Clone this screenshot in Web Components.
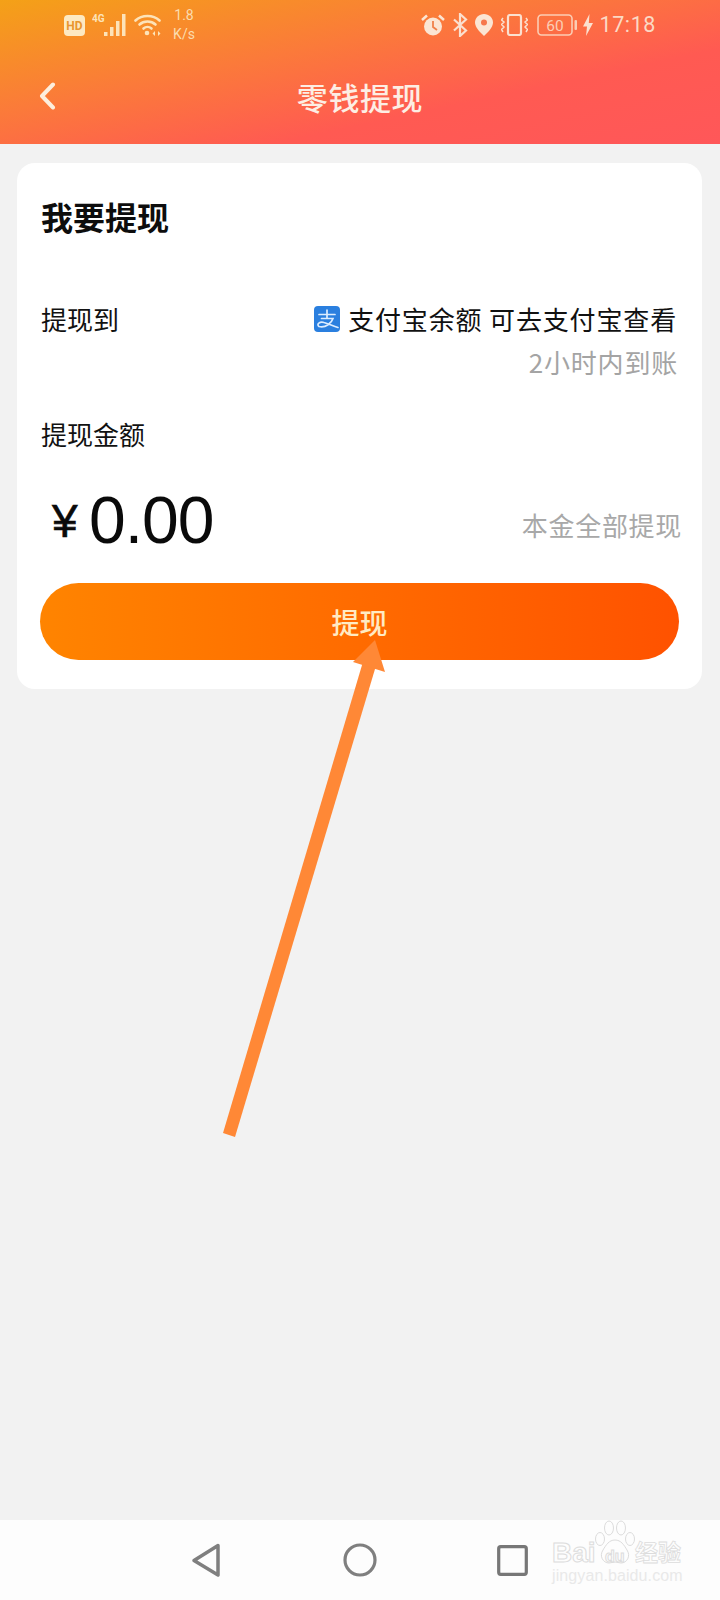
<!DOCTYPE html>
<html lang="zh-CN">
<head>
<meta charset="utf-8">
<title>零钱提现</title>
<style>
html,body{margin:0;padding:0;background:#f2f2f2}
body{font-family:"Noto Sans CJK SC","Noto Sans",sans-serif}
</style>
</head>
<body>
<x-screen>
  <x-app-header title="零钱提现"></x-app-header>
  <x-withdraw-card></x-withdraw-card>
  <x-nav-bar></x-nav-bar>
  <x-arrow></x-arrow>
  <x-watermark></x-watermark>
</x-screen>
<script>
function define(name, html){
  customElements.define(name, class extends HTMLElement{
    constructor(){super();this.attachShadow({mode:'open'}).innerHTML=typeof html==='function'?html(this):html;}
  });
}
const CJK='"Noto Sans CJK SC","Noto Sans",sans-serif';

define('x-screen',`<style>
:host{display:flex;flex-direction:column;position:relative;width:720px;height:1600px;overflow:hidden;background:#f2f2f2;font-family:${CJK}}
</style><slot></slot>`);

define('x-status-bar',`<style>
:host{display:flex;align-items:center;height:46px;padding-top:2px;color:#fde3b8;font-family:Roboto,"Liberation Sans",sans-serif}
svg{display:block;flex:none}
.sp{display:flex;flex-direction:column;align-items:center;width:24px;margin-left:10px;font-size:14px;line-height:19px;color:#fbdcae}
.right{display:flex;align-items:center;margin-left:auto;margin-right:64px;color:#fbd9c4}
.time{font-size:21.5px;letter-spacing:.6px;margin-left:6px;line-height:46px}
</style>
<svg style="margin-left:64px" width="21" height="21" viewBox="0 0 21 21"><rect width="21" height="21" rx="4" fill="#fde9c2"/><text x="10.500" y="15" text-anchor="middle" font-size="12" font-weight="700" font-family="Roboto,sans-serif" fill="#e9962f">HD</text></svg>
<svg style="margin-left:7px" width="36" height="24" viewBox="0 0 36 24"><text x="0" y="9" font-size="10" font-weight="700" font-family="Roboto,sans-serif" fill="#fde3b8">4G</text><g fill="#fde3b8"><rect x="12" y="19" width="3.500" height="4"/><rect x="18" y="14" width="3.500" height="9"/><rect x="24" y="8" width="3.500" height="15"/><rect x="30" y="1" width="3.500" height="22"/></g></svg>
<svg style="margin-left:6px" width="28" height="22" viewBox="0 0 28 22"><g fill="none" stroke="#fde3b8" stroke-width="2.600" stroke-linecap="round"><path d="M1.500 6.500C8 .5 19 .5 25.500 6.500"/><path d="M5.500 10.500C10 6.500 17 6.500 21.500 10.500"/><path d="M9.500 14.500C11.800 12.500 15.200 12.500 17.500 14.500"/></g><circle cx="13" cy="19" r="2.300" fill="#fde3b8"/><path d="M21 17l-2.500 2.500 2.500 2.500zM24 17l2.500 2.500-2.500 2.500z" fill="#fde3b8"/></svg>
<div class="sp"><span>1.8</span><span>K/s</span></div>
<div class="right">
<svg width="24" height="23" viewBox="0 0 24 23"><circle cx="12" cy="12.500" r="9" fill="#fbe5d3"/><path d="M12 7v6l4 3" fill="none" stroke="#f0804a" stroke-width="1.800"/><path d="M1 6l5-4.500M23 6l-5-4.500" stroke="#fbe5d3" stroke-width="2.500" fill="none"/></svg>
<svg style="margin-left:7px" width="16" height="24" viewBox="0 0 16 24"><path d="M2 6.500l12 11-6 5.500V1l6 5.500-12 11" fill="none" stroke="#fbe0cf" stroke-width="2.200"/></svg>
<svg style="margin-left:7px" width="18" height="22" viewBox="0 0 18 22"><path d="M9 0c5 0 9 3.800 9 8.600 0 5-5.200 10-9 13.400C5.200 18.600 0 13.600 0 8.600 0 3.800 4 0 9 0z" fill="#fbe5d3"/><circle cx="9" cy="8.500" r="3" fill="#f6774b"/></svg>
<svg style="margin-left:8px" width="27" height="22" viewBox="0 0 27 22"><rect x="7" y="1" width="13" height="20" rx="2" fill="none" stroke="#fbe0cf" stroke-width="2.200"/><path d="M2 4l-1.500 2 2.500 2-2.500 2.500 2.500 2.500-2.500 2.500L2 18M25 4l1.500 2-2.500 2 2.500 2.500-2.500 2.500 2.500 2.500L25 18" fill="none" stroke="#fbe0cf" stroke-width="1.500"/></svg>
<svg style="margin-left:9px" width="40" height="22" viewBox="0 0 40 22"><rect x="1" y="1" width="34" height="20" rx="3.500" fill="none" stroke="#fbcdb4" stroke-width="1.600"/><rect x="37.500" y="6" width="2.500" height="10" rx="1" fill="#fbcdb4"/><text x="18" y="16.500" text-anchor="middle" font-size="15.500" font-family="Roboto,sans-serif" fill="#fbcdb4">60</text></svg>
<svg style="margin-left:6px" width="10" height="22" viewBox="0 0 10 22"><path d="M6.500 0L0 12.500h4L3 22l7-13H5.800z" fill="#fbe0cf"/></svg>
<span class="time">17:18</span>
</div>`);

define('x-app-header',h=>`<style>
:host{display:block;height:144px;flex:none;background:linear-gradient(168deg,#f4a117 0%,#fb7a3a 38%,#ff5a52 68%,#ff5759 100%)}
.bar{display:flex;align-items:center;justify-content:center;position:relative;height:96px}
.back{position:absolute;left:39px;top:34px}
h1{margin:0;font-weight:500;font-size:31px;line-height:40px;letter-spacing:.6px;color:#fdeee4;position:relative;top:1px}
</style>
<x-status-bar></x-status-bar>
<div class="bar">
<svg class="back" width="17" height="28" viewBox="0 0 17 28"><path d="M14 2.500L3 14l11 11.500" fill="none" stroke="#fdeedd" stroke-width="4" stroke-linecap="round" stroke-linejoin="round"/></svg>
<h1>${h.getAttribute('title')||''}</h1>
</div>`);

define('x-alipay-mark',`<style>:host{display:block;width:26px;height:26px;flex:none}svg{display:block}</style>
<svg width="26" height="26" viewBox="0 0 26 26"><rect width="26" height="26" rx="4" fill="#2a7fdf"/><g fill="none" stroke="#dcedff" stroke-width="1.700" stroke-linecap="round"><path d="M5 8.500h16M13 4v8M7.500 12.500h11.500C17.500 17 12 22 5 20.500 2 18.500 6 15 10 16.500c4 1 8 3 14 5"/></g></svg>`);

define('x-withdraw-card',`<style>
:host{display:block;box-sizing:border-box;margin:19px 18px 0 17px;padding:33px 23px 29px;background:#fff;border-radius:18px;color:#111;flex:none}
h2{margin:0 0 0 1px;font-size:32px;line-height:40px;font-weight:700;color:#0d0d0d}
.row{display:flex;justify-content:space-between;align-items:center;height:36px;font-size:26px;line-height:36px;margin:0 1px}
.r1{margin-top:65px}
.dest{display:flex;align-items:center;gap:8px;margin-right:1px;white-space:nowrap;letter-spacing:.85px}
.arrive{display:flex;justify-content:flex-end;margin:7px 1px 0;height:36px;font-size:26px;line-height:36px;letter-spacing:.8px;color:#a4a4a4}
.r2{margin-top:36px}
.amount{display:flex;align-items:center;height:80px;margin:28px -3px 0 1px;color:#0a0a0a}
.yen{font-family:"Liberation Sans",sans-serif;font-size:46px;margin-left:11px;width:37px;position:relative;top:1px;-webkit-text-stroke:.6px #0a0a0a}
.val{font-family:"Liberation Sans",sans-serif;font-size:66px;line-height:80px;letter-spacing:-1px}
.all{margin-left:auto;font-size:26px;color:#a8a8a8;position:relative;top:4px;letter-spacing:.7px}
.btn{display:flex;align-items:center;justify-content:center;height:77px;margin-top:23px;border-radius:39px;background:linear-gradient(90deg,#ff8400,#ff5200);color:#ffebc4;font-size:28px;font-weight:500}
</style>
<h2>我要提现</h2>
<div class="row r1"><span>提现到</span><span class="dest"><x-alipay-mark></x-alipay-mark><span>支付宝余额 可去支付宝查看</span></span></div>
<div class="arrive">2小时内到账</div>
<div class="row r2"><span>提现金额</span></div>
<div class="amount"><span class="yen">¥</span><span class="val">0.00</span><span class="all">本金全部提现</span></div>
<div class="btn">提现</div>`);

define('x-nav-bar',`<style>
:host{display:block;margin-top:auto;height:80px;flex:none;background:#fdfdfd}
.in{display:flex;align-items:center;height:80px;padding-left:191px}
svg{display:block;flex:none}
</style>
<div class="in">
<svg width="30" height="36" viewBox="0 0 30 36"><path d="M27 3.500L3 18.500l24 14.500z" fill="none" stroke="#7f7f7f" stroke-width="3.500" stroke-linejoin="round"/></svg>
<svg style="margin-left:122px" width="34" height="34" viewBox="0 0 34 34"><circle cx="17" cy="17" r="15" fill="none" stroke="#7f7f7f" stroke-width="3.200"/></svg>
<svg style="margin-left:120px" width="31" height="31" viewBox="0 0 31 31"><rect x="1.700" y="1.700" width="27.600" height="27.600" rx="2" fill="none" stroke="#777" stroke-width="3.200"/></svg>
</div>`);

define('x-arrow',`<style>:host{position:absolute;left:0;top:0;display:block;width:720px;height:1200px;pointer-events:none}svg{display:block}</style>
<svg width="720" height="1200" viewBox="0 0 720 1200"><path d="M223 1133L365 655 378 659 235 1137z" fill="#ff8836"/><path d="M375 640L353 662 385 672z" fill="#ff8836"/></svg>`);

define('x-watermark',`<style>
:host{position:absolute;left:552px;top:1520px;display:block;width:132px;height:66px;pointer-events:none;font-family:"Liberation Sans",sans-serif}
svg{position:absolute;left:42px;top:0}
.o{position:absolute;color:transparent;-webkit-text-stroke:1px #dcdcdc;font-weight:700;line-height:1}
.bai{left:0;top:19px;font-size:28px}
.du{left:53px;top:29px;font-size:16px}
.jy{left:83px;top:20px;font-size:23px;font-family:${CJK};-webkit-text-stroke:.8px #dcdcdc}
.url{position:absolute;left:0;top:47px;font-size:16px;line-height:18px;color:#e9e9e9;letter-spacing:.1px;white-space:nowrap}
</style>
<svg width="42" height="46" viewBox="0 0 42 46"><g fill="none" stroke="#dcdcdc" stroke-width="1"><ellipse cx="6" cy="19" rx="4.500" ry="6.500"/><ellipse cx="15" cy="8" rx="4.500" ry="7"/><ellipse cx="27" cy="8" rx="4.500" ry="7"/><ellipse cx="36" cy="19" rx="4.500" ry="6.500"/><path d="M21 20c6 0 9 5 12 10 4 6 0 13-6 13-2 0-4-1-6-1s-4 1-6 1c-6 0-10-7-6-13 3-5 6-10 12-10z"/></g></svg>
<span class="o bai">Bai</span><span class="o du">du</span><span class="o jy">经验</span>
<span class="url">jingyan.baidu.com</span>`);
</script>
</body>
</html>
